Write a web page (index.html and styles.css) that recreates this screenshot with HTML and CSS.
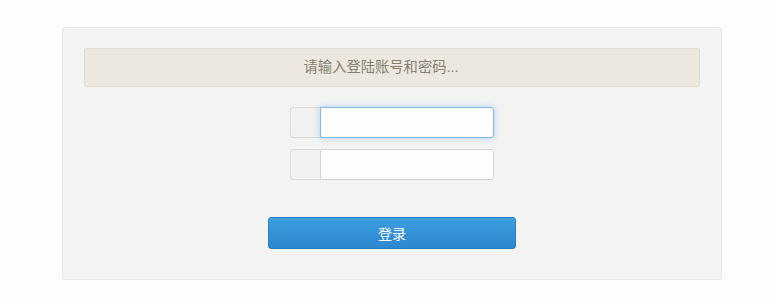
FILE: index.html
```html
<!DOCTYPE html>
<html lang="zh">
<head>
    <meta charset="UTF-8">
    <title>登录</title>
    <link rel="stylesheet" href="styles.css">
</head>
<body>
    <div class="login-box">
        <div class="alert">请输入登陆账号和密码...</div>
        <div class="fields">
            <div class="input-group">
                <span class="addon"></span>
                <input type="text" class="field focused" autofocus>
            </div>
            <div class="input-group">
                <span class="addon"></span>
                <input type="password" class="field">
            </div>
        </div>
        <div class="actions">
            <button class="btn-login">登录</button>
        </div>
    </div>
</body>
</html>
```

FILE: styles.css
```css
body {
    margin: 0;
    background: #fdfdfc;
    font-family: "Liberation Sans", "Noto Sans CJK SC", sans-serif;
    font-size: 14px;
}
.login-box {
    box-sizing: border-box;
    width: 660px;
    margin: 27px 0 0 62px;
    padding: 20px 21px 30px;
    background: #f3f3f2;
    border: 1px solid #e7e7e5;
    border-radius: 4px;
    box-shadow: 0 1px 1px rgba(0, 0, 0, 0.04);
}
.alert {
    height: 37px;
    line-height: 37px;
    padding-right: 22px;
    font-size: 14.3px;
    text-align: center;
    color: #867f70;
    background: #ece8df;
    border: 1px solid #e0dcd0;
    border-radius: 3px;
}
.fields {
    display: flex;
    flex-direction: column;
    align-items: center;
    gap: 11px;
    margin-top: 20px;
}
.input-group {
    display: flex;
    width: 204px;
    height: 31px;
    margin-left: -1px;
}
.addon {
    flex: none;
    box-sizing: border-box;
    width: 30px;
    background: #f1f1f0;
    border: 1px solid #d9d9d7;
    border-right: none;
    border-radius: 3px 0 0 3px;
}
.field {
    box-sizing: border-box;
    flex: 1;
    min-width: 0;
    height: 31px;
    padding: 4px 6px;
    font-size: 18px;
    color: #555;
    background: #fdfdfc;
    border: 1px solid #d4d4d2;
    border-radius: 0 3px 3px 0;
    outline: none;
    caret-color: #888;
}
.field.focused {
    border-color: #7fb8e6;
    box-shadow: 0 0 6px rgba(82, 168, 236, 0.45);
}
.actions {
    display: flex;
    justify-content: center;
    margin-top: 37px;
}
.btn-login {
    width: 248px;
    height: 32px;
    font-family: inherit;
    font-size: 14px;
    color: #fff;
    background: linear-gradient(#3d9ee0, #2d88cf);
    border: 1px solid #2a7fc0;
    border-radius: 3px;
    cursor: pointer;
}
```
